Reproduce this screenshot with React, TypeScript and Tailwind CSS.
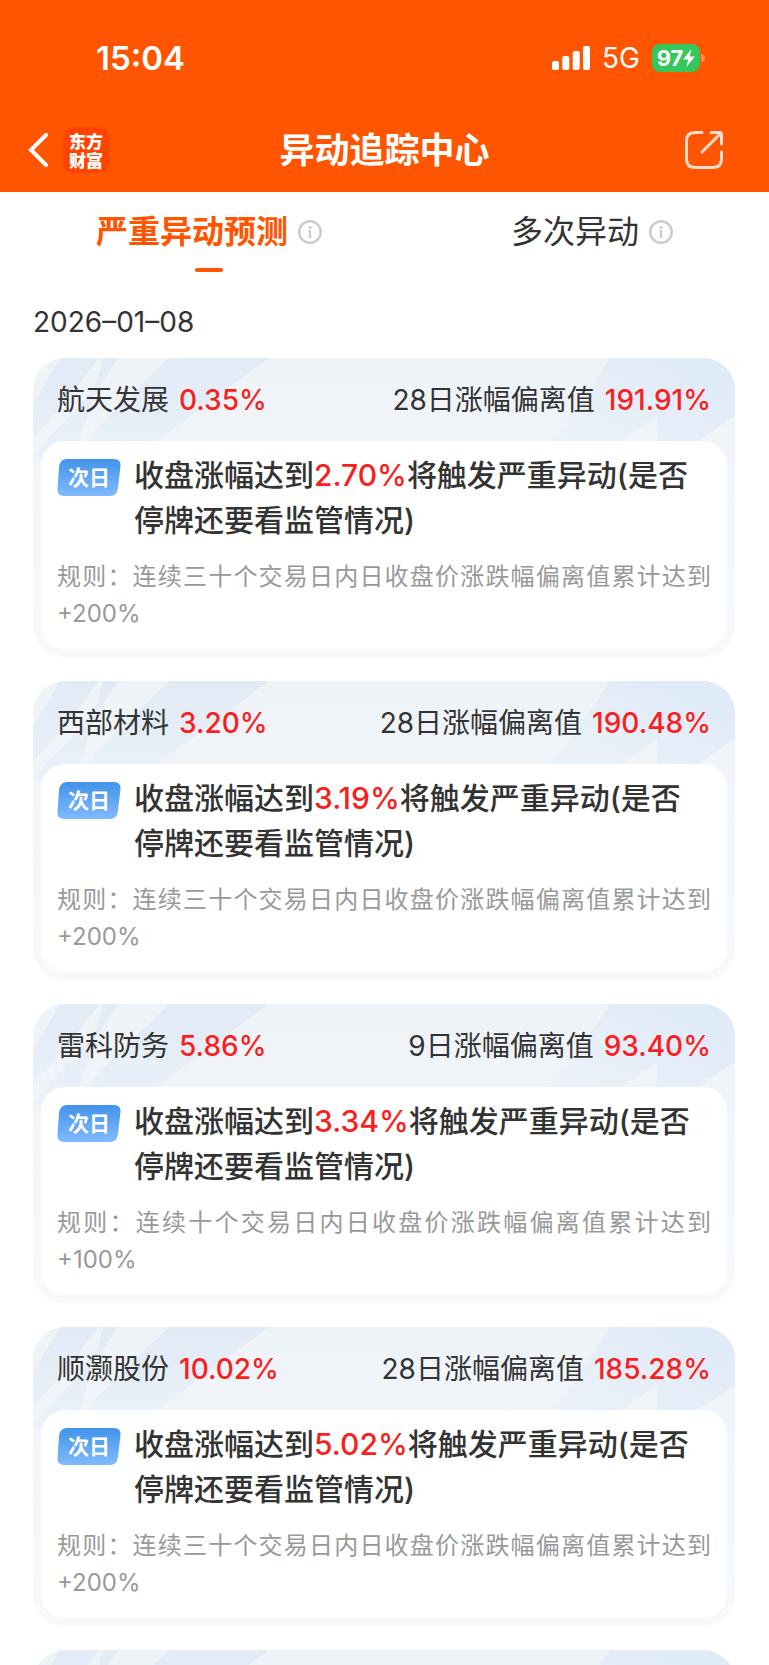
import React, { useState } from 'react';

interface Stock {
    name: string;
    change: string;
    days: number;
    deviation: string;
    trigger: string;
    period: string;
    limit: string;
}

const stocks: Stock[] = [
    { name: '航天发展', change: '0.35%', days: 28, deviation: '191.91%', trigger: '2.70%', period: '三十', limit: '+200%' },
    { name: '西部材料', change: '3.20%', days: 28, deviation: '190.48%', trigger: '3.19%', period: '三十', limit: '+200%' },
    { name: '雷科防务', change: '5.86%', days: 9, deviation: '93.40%', trigger: '3.34%', period: '十', limit: '+100%' },
    { name: '顺灏股份', change: '10.02%', days: 28, deviation: '185.28%', trigger: '5.02%', period: '三十', limit: '+200%' },
];

const InfoIcon: React.FC = () => (
    <svg className="w-6 h-6 text-[#cccccc]" viewBox="0 0 24 24" fill="none" aria-hidden="true">
        <circle cx="12" cy="12" r="10.8" stroke="currentColor" strokeWidth="2.4" />
        <circle cx="12" cy="7.6" r="1.5" fill="currentColor" />
        <path d="M10.400 11H12v5.500M10.400 16.700h3.200" stroke="currentColor" strokeWidth="2" />
    </svg>
);

const StatusBar: React.FC = () => (
    <div className="flex items-center justify-between h-[116px] pl-24 pr-16">
        <span className="text-[33px] leading-none font-semibold">15:04</span>
        <div className="flex items-center">
            <svg className="w-[38px] h-6" viewBox="0 0 38 24" fill="currentColor" aria-hidden="true">
                <rect x="0" y="15" width="7" height="9" rx="2" />
                <rect x="10.3" y="10" width="7" height="14" rx="2" />
                <rect x="20.7" y="5" width="7" height="19" rx="2" />
                <rect x="31" y="0" width="7" height="24" rx="2" />
            </svg>
            <span className="ml-3 text-[28px] leading-none">5G</span>
            <div className="ml-3 flex items-center justify-center w-12 h-7 rounded-lg bg-[#34c759]">
                <span className="text-[22px] leading-none font-bold">97</span>
                <svg className="w-3 h-[18px]" viewBox="0 0 12 18" fill="currentColor" aria-hidden="true">
                    <path d="M8.5 0 0 10.4h5.2L3.4 18 12 7.4H6.8z" />
                </svg>
            </div>
            <div className="ml-px w-1 h-2 rounded-r-full bg-[#ff8a4d]"></div>
        </div>
    </div>
);

const CardPattern: React.FC = () => (
    <svg className="absolute inset-x-0 top-0 w-full h-[100px]" viewBox="0 0 702 100" preserveAspectRatio="none" aria-hidden="true">
        <defs>
            <linearGradient id="streak" x1="0" y1="0" x2="0" y2="100" gradientUnits="userSpaceOnUse">
                <stop offset="0" stopColor="#e1ebf6" />
                <stop offset="1" stopColor="#eaf1f9" />
            </linearGradient>
            <linearGradient id="glow" x1="1" y1="0" x2="0" y2="1">
                <stop offset="0.2" stopColor="#e0ebf8" />
                <stop offset="1" stopColor="#eef3f9" />
            </linearGradient>
        </defs>
        <path d="M27 0H66L31 46 0 80V46z" fill="url(#streak)" />
        <path d="M70 0H85L62 35 46 84 36 100H0L12 84 52 42 64 24z" fill="url(#streak)" />
        <path d="M136 0H236L124 83 100 100H46L62 72z" fill="url(#streak)" />
        <path d="M577 0H702V58L665 83 640 100H624V58L587 84H515L540 56z" fill="url(#glow)" />
    </svg>
);

const StockCard: React.FC<{ stock: Stock }> = ({ stock }) => (
    <article className="relative overflow-hidden rounded-[32px] bg-linear-to-b from-[#eef3f8] to-[#f7f9fb] px-2 pb-2">
        <CardPattern />
        <div className="relative flex items-center justify-between h-[83px] px-4 text-[28px]">
            <h2 className="flex gap-[10px]">
                {stock.name}
                <span className="font-medium text-[#fa1e1e]">{stock.change}</span>
            </h2>
            <p className="flex gap-[10px]">
                {stock.days}日涨幅偏离值
                <span className="font-medium text-[#fa1e1e]">{stock.deviation}</span>
            </p>
        </div>
        <div className="relative rounded-3xl bg-white px-4 pt-3 pb-[17px]">
            <div className="flex items-start pr-4">
                <span className="relative mt-[6px] mr-[13px] flex shrink-0 items-center justify-center w-16 h-[37px] text-[21px] font-bold text-white">
                    <svg className="absolute inset-0 w-full h-full" viewBox="0 0 63 37" preserveAspectRatio="none" aria-hidden="true">
                        <defs>
                            <linearGradient id="badge" x1="0" y1="0" x2="0" y2="1">
                                <stop offset="0" stopColor="#4293e8" />
                                <stop offset="1" stopColor="#80baff" />
                            </linearGradient>
                        </defs>
                        <path d="M10 0H56Q63 0 62.5 7L60 29Q59 37 52 37H7Q0 37 0.500 30L2 8Q3 0 10 0z" fill="url(#badge)" />
                    </svg>
                    <span className="relative">次日</span>
                </span>
                <p className="text-[30px] leading-[45px] font-medium">
                    收盘涨幅达到<span className="text-[#fa1e1e]">{stock.trigger}</span>将触发严重异动(是否停牌还要看监管情况)
                </p>
            </div>
            <p className="mt-[15px] text-2xl leading-[37px] text-justify text-[#999999]">
                规则：连续{stock.period}个交易日内日收盘价涨跌幅偏离值累计达到{stock.limit}
            </p>
        </div>
    </article>
);

const App: React.FC = () => {
    const [tab, setTab] = useState(0);

    return (
        <div className="h-screen overflow-hidden bg-white text-[#333333] font-['Inter','Noto_Sans_CJK_SC',sans-serif]">
            <header className="bg-[#ff5500] text-white">
                <StatusBar />
                <div className="relative flex items-center justify-between h-[76px] pl-7 pr-[46px] pb-2">
                    <div className="flex items-center">
                        <button type="button" aria-label="返回">
                            <svg className="w-5 h-[34px]" viewBox="0 0 20 34" fill="none" stroke="currentColor" strokeWidth="4" strokeLinecap="round" aria-hidden="true">
                                <path d="M18 2 3 17l15 15" />
                            </svg>
                        </button>
                        <div className="ml-[15px] flex flex-col items-center justify-center w-[46px] h-[46px] rounded-[10px] bg-[#ff4400] text-[17px] leading-[19px] font-black font-['Noto_Sans_CJK_SC',sans-serif]">
                            <span>东方</span>
                            <span>财富</span>
                        </div>
                    </div>
                    <h1 className="absolute inset-x-0 text-center pointer-events-none text-[35px] leading-none font-bold">异动追踪中心</h1>
                    <button type="button" aria-label="分享">
                        <svg className="w-[38px] h-[38px]" viewBox="0 0 38 38" fill="none" stroke="#ffddcc" strokeWidth="3" strokeLinecap="round" strokeLinejoin="round" aria-hidden="true">
                            <path d="M17 1.5H10Q1.5 1.5 1.5 10V28Q1.5 36.5 10 36.5H28Q36.5 36.5 36.5 28V21" />
                            <path d="M26 1.5h8.5q2 0 2 2V13M35.5 2.5 17 21" />
                        </svg>
                    </button>
                </div>
            </header>

            <nav className="flex justify-between px-24 h-[92px]">
                {['严重异动预测', '多次异动'].map((label, i) => (
                    <button
                        key={label}
                        type="button"
                        onClick={() => setTab(i)}
                        className="relative flex items-center h-20 gap-[10px]"
                    >
                        <span className={tab === i ? 'text-[32px] font-bold text-[#ff5500]' : 'text-[32px]'}>{label}</span>
                        <InfoIcon />
                        {tab === i && <span className="absolute bottom-0 left-1/2 -translate-x-1/2 w-7 h-1 rounded-full bg-[#ff5500]"></span>}
                    </button>
                ))}
            </nav>

            <main className="pl-[33px] pr-[34px]">
                <p className="h-[74px] pt-4 text-[28px] leading-[44px]">2026–01–08</p>
                <div className="flex flex-col gap-6">
                    {stocks.map(stock => (
                        <StockCard key={stock.name} stock={stock} />
                    ))}
                    <div className="relative overflow-hidden h-[299px] rounded-[32px] bg-[#eef3f8]">
                        <CardPattern />
                    </div>
                </div>
            </main>
        </div>
    );
};

export default App;
